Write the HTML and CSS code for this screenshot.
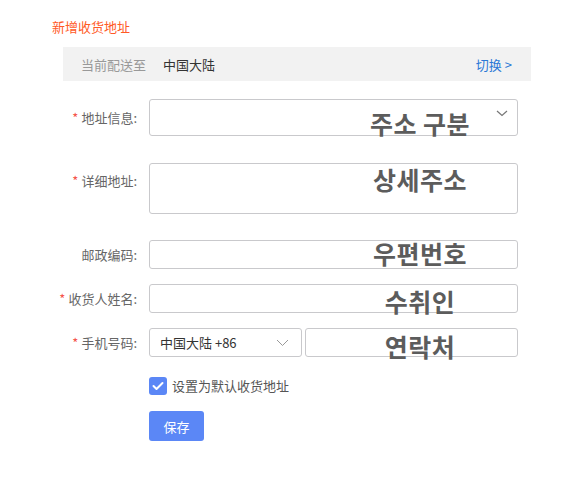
FILE: index.html
```html
<!DOCTYPE html>
<html lang="zh">
<head>
<meta charset="utf-8">
<title>新增收货地址</title>
<link rel="stylesheet" href="styles.css">
</head>
<body>
<div class="page">
  <div class="title">新增收货地址</div>
  <div class="bar">
    <span class="bar-label">当前配送至</span>
    <span class="bar-value">中国大陆</span>
    <span class="bar-link">切换 &gt;</span>
  </div>
  <div class="form">
    <div class="row row-addr">
      <label class="label"><span class="star">*</span>地址信息:</label>
      <div class="field select-big">
        <svg class="chev chev-top" width="12" height="7" viewBox="0 0 12 7"><path d="M1 1 L6 5.5 L11 1" fill="none" stroke="#777" stroke-width="1.2"/></svg>
      </div>
      <span class="ko ko-1">주소 구분</span>
    </div>
    <div class="row row-detail">
      <label class="label label-top"><span class="star">*</span>详细地址:</label>
      <div class="field textarea"></div>
      <span class="ko ko-2">상세주소</span>
    </div>
    <div class="row row-small">
      <label class="label">邮政编码:</label>
      <div class="field input"></div>
      <span class="ko ko-3">우편번호</span>
    </div>
    <div class="row row-small">
      <label class="label"><span class="star">*</span>收货人姓名:</label>
      <div class="field input"></div>
      <span class="ko ko-4">수취인</span>
    </div>
    <div class="row row-small">
      <label class="label"><span class="star">*</span>手机号码:</label>
      <div class="phone">
        <div class="field select-small">
          <span class="sel-text">中国大陆 +86</span>
          <svg class="chev" width="13" height="8" viewBox="0 0 13 8"><path d="M1 1 L6.5 6.5 L12 1" fill="none" stroke="#999" stroke-width="1"/></svg>
        </div>
        <div class="field input phone-input"></div>
      </div>
      <span class="ko ko-5">연락처</span>
    </div>
    <div class="row row-check">
      <span class="spacer"></span>
      <div class="check-wrap">
        <span class="checkbox">
          <svg width="12" height="10" viewBox="0 0 12 10"><path d="M1.5 5 L4.5 8 L10.5 2" fill="none" stroke="#fff" stroke-width="2" stroke-linecap="round" stroke-linejoin="round"/></svg>
        </span>
        <span class="check-text">设置为默认收货地址</span>
      </div>
    </div>
    <div class="row row-btn">
      <span class="spacer"></span>
      <button class="btn">保存</button>
    </div>
  </div>
</div>
</body>
</html>
```
FILE: styles.css
```css
html, body {
  margin: 0;
  padding: 0;
  background: #fff;
}
body {
  font-family: "Noto Sans CJK SC", "Noto Sans", sans-serif;
  font-size: 13px;
  color: #333;
}
.page {
  padding: 18px 0 0 52px;
  width: 479px;
}
.title {
  color: #ff5a26;
  font-size: 13px;
  line-height: 18px;
}
.bar {
  margin: 11px 0 0 11px;
  width: 468px;
  height: 34px;
  background: #f2f2f2;
  display: flex;
  align-items: center;
  padding: 0 19px 0 18px;
  box-sizing: border-box;
}
.bar-label {
  color: #999;
}
.bar-value {
  color: #333;
  margin-left: 17px;
}
.bar-link {
  margin-left: auto;
  color: #2a78d6;
}
.form {
  margin-top: 18px;
  display: flex;
  flex-direction: column;
}
.row {
  position: relative;
  display: grid;
  grid-template-columns: 85px 369px;
  column-gap: 12px;
  align-items: center;
}
.row-addr { margin-bottom: 27px; }
.row-detail { margin-bottom: 26px; align-items: start; }
.row-small { margin-bottom: 15px; }
.row-small:nth-child(5) { margin-bottom: 20px; }
.row-check { margin-bottom: 16px; }
.label {
  text-align: right;
  color: #666;
  line-height: 18px;
  white-space: nowrap;
}
.label-top {
  padding-top: 9px;
}
.star {
  color: #f5554a;
  margin-right: 3px;
}
.field {
  border: 1px solid #c9c9cc;
  border-radius: 3px;
  box-sizing: border-box;
  background: #fff;
  position: relative;
}
.select-big { height: 37px; }
.textarea { height: 51px; }
.input { height: 29px; }
.chev-top {
  position: absolute;
  right: 9px;
  top: 10px;
}
.phone {
  display: flex;
  gap: 3px;
}
.select-small {
  width: 153px;
  height: 29px;
  display: flex;
  align-items: center;
  padding: 0 12px 0 10px;
  justify-content: space-between;
}
.sel-text { color: #333; }
.phone-input { flex: 1; }
.ko {
  position: absolute;
  left: 368px;
  transform: translateX(-50%);
  font-family: "Noto Sans CJK KR", sans-serif;
  font-weight: 700;
  font-size: 25px;
  line-height: 25px;
  letter-spacing: 0.5px;
  color: #5c5c5c;
  white-space: nowrap;
  pointer-events: none;
}
.ko-1 { top: 12px; }
.ko-2 { top: 4px; }
.ko-3 { top: 1px; }
.ko-4 { top: 5px; }
.ko-5 { top: 6px; }
.check-wrap {
  display: flex;
  align-items: center;
  height: 18px;
}
.checkbox {
  width: 18px;
  height: 18px;
  border-radius: 3px;
  background: #5b87f6;
  display: flex;
  align-items: center;
  justify-content: center;
}
.check-text {
  margin-left: 5px;
  color: #555;
  line-height: 18px;
}
.btn {
  justify-self: start;
  width: 55px;
  height: 30px;
  border: none;
  border-radius: 3px;
  background: #5b87f6;
  color: #fff;
  font-family: "Noto Sans CJK SC", sans-serif;
  font-size: 13px;
  padding: 0;
}
```
